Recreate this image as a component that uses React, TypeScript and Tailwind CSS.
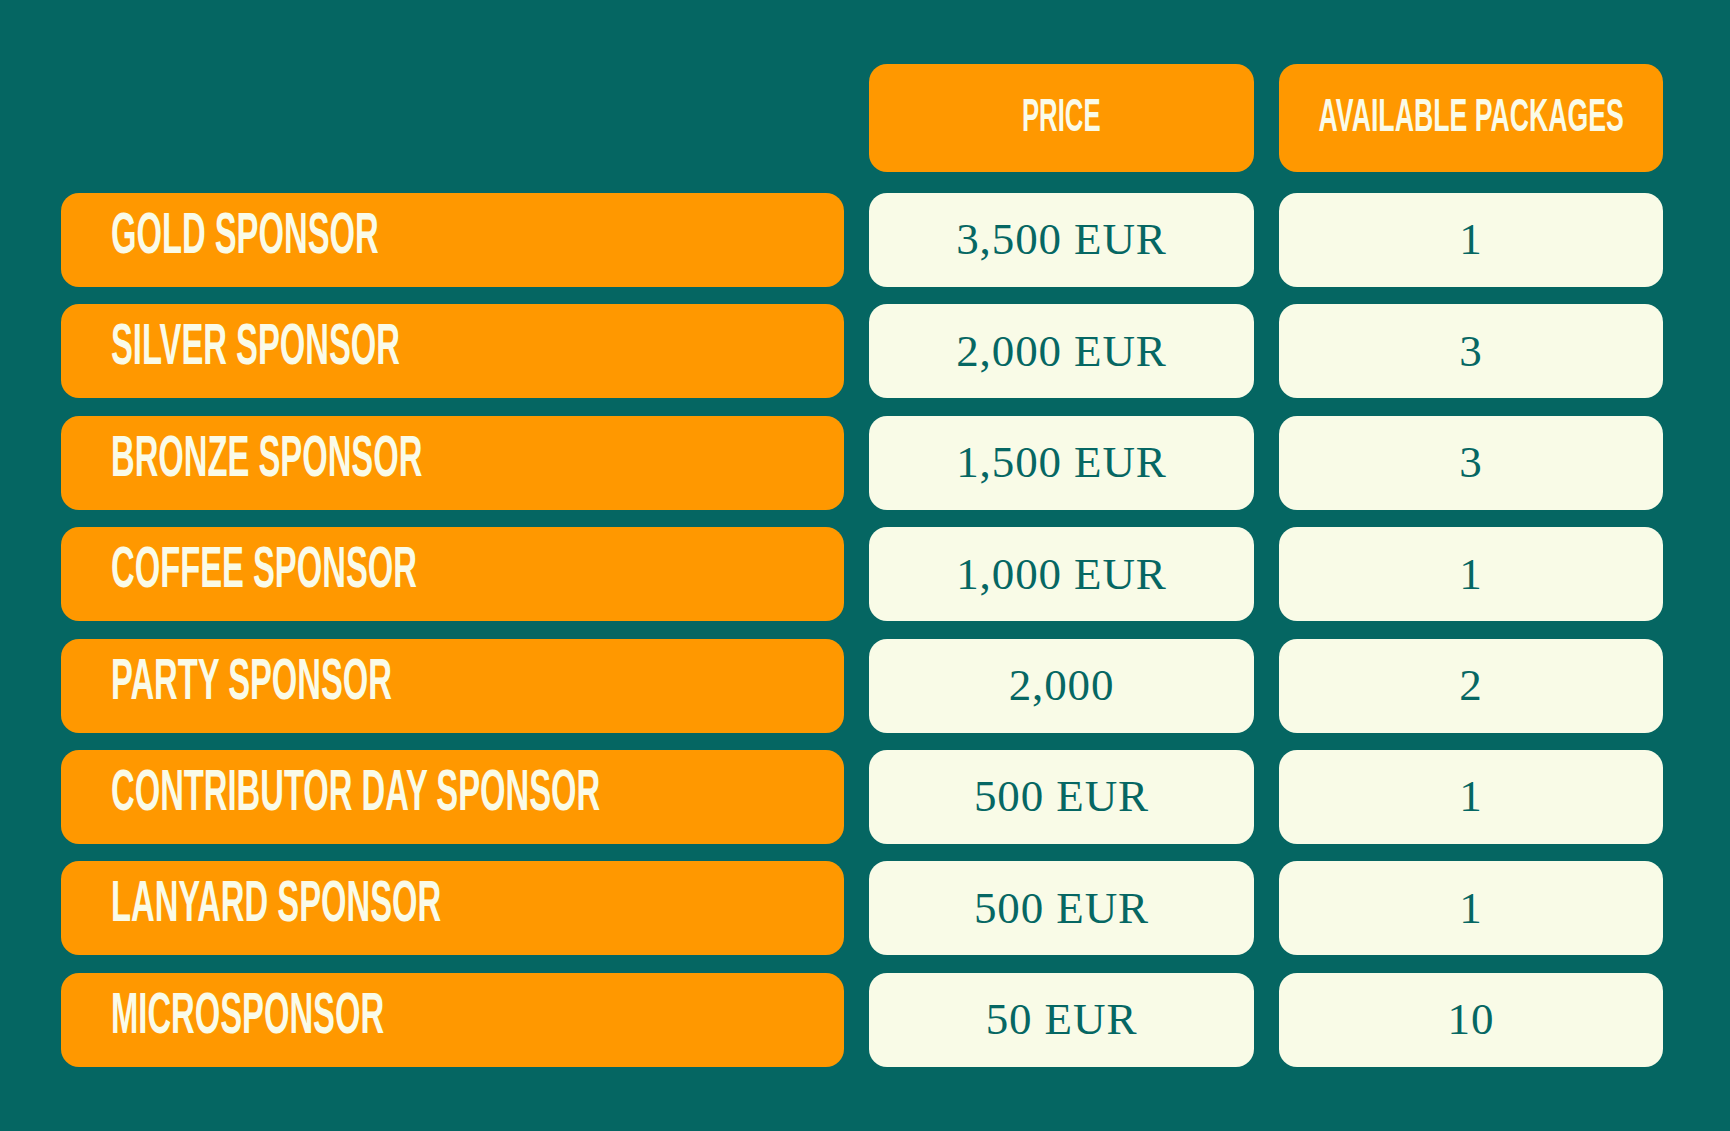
const rows = [
  { name: "GOLD SPONSOR", price: "3,500 EUR", qty: "1" },
  { name: "SILVER SPONSOR", price: "2,000 EUR", qty: "3" },
  { name: "BRONZE SPONSOR", price: "1,500 EUR", qty: "3" },
  { name: "COFFEE SPONSOR", price: "1,000 EUR", qty: "1" },
  { name: "PARTY SPONSOR", price: "2,000", qty: "2" },
  { name: "CONTRIBUTOR DAY SPONSOR", price: "500 EUR", qty: "1" },
  { name: "LANYARD SPONSOR", price: "500 EUR", qty: "1" },
  { name: "MICROSPONSOR", price: "50 EUR", qty: "10" },
]

const display = "font-['Liberation_Sans',sans-serif] font-bold text-[#fafbe8]"
const serif = "font-['Liberation_Serif',serif] text-[45px] tracking-[0.02em] text-[#066763]"

export default function App() {
  return (
    <div className="min-h-screen w-full bg-[#056662] pl-[61px] pt-[64px]">
      <div className="grid grid-cols-[783px_385px_384px] gap-x-[25px] gap-y-[17.4px]">
        <div className="mb-[3.6px]" />
        <div className="mb-[3.6px] flex h-[108px] items-center justify-center rounded-[18px] bg-[#ff9800] pb-[7px]">
          <span className={`${display} inline-block scale-x-[0.56] text-[46px] leading-none`}>PRICE</span>
        </div>
        <div className="mb-[3.6px] flex h-[108px] items-center justify-center rounded-[18px] bg-[#ff9800] pb-[7px]">
          <span className={`${display} inline-block scale-x-[0.58] whitespace-nowrap text-[46px] leading-none`}>
            AVAILABLE PACKAGES
          </span>
        </div>

        {rows.map((r) => (
          <>
            <div key={r.name} className="flex h-[94px] items-center rounded-[18px] bg-[#ff9800] pb-[14px] pl-[50px]">
              <span className={`${display} inline-block origin-left scale-x-[0.565] whitespace-nowrap text-[58px] leading-none`}>
                {r.name}
              </span>
            </div>
            <div className="flex h-[94px] items-center justify-center rounded-[18px] bg-[#f9fbe7]">
              <span className={`${serif} leading-none`}>{r.price}</span>
            </div>
            <div className="flex h-[94px] items-center justify-center rounded-[18px] bg-[#f9fbe7]">
              <span className={`${serif} leading-none`}>{r.qty}</span>
            </div>
          </>
        ))}
      </div>
    </div>
  )
}
